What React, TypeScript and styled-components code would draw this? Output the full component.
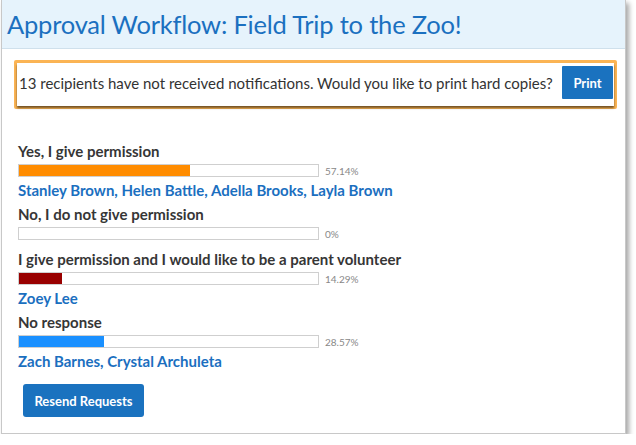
import React from 'react';
import styled, { createGlobalStyle } from 'styled-components';

const GlobalStyle = createGlobalStyle`
  html, body {
    margin: 0;
    padding: 0;
    background: #fff;
    font-family: Lato, "Open Sans", sans-serif;
  }
`;

const Panel = styled.div`
  margin-left: 1px;
  width: 623px;
  height: 433px;
  background: #fff;
  border: 1px solid #c8c8c8;
  border-top: none;
  box-shadow: 3px 3px 5px rgba(0, 0, 0, 0.35);
  display: flex;
  flex-direction: column;
`;

const Header = styled.div`
  height: 48px;
  background: #e6f3fc;
  border-bottom: 1px solid #cfe0ec;
  display: flex;
  align-items: center;
  padding-left: 5px;
`;

const Title = styled.h1`
  margin: 0;
  font-size: 25.5px;
  font-weight: 400;
  color: #1b70c0;
  letter-spacing: -0.2px;
`;

const Body = styled.div`
  flex: 1;
  display: flex;
  flex-direction: column;
  padding: 11px 8px 0 12px;
`;

const Notice = styled.div`
  background: #fbb454;
  padding: 3px;
  border-radius: 2px;
`;

const NoticeInner = styled.div`
  background: #fff;
  display: flex;
  align-items: center;
  justify-content: space-between;
  padding: 3px 1px 7px 2px;
  box-shadow: 0 2px 2px rgba(0, 0, 0, 0.55);
`;

const NoticeText = styled.span`
  font-size: 15px;
  color: #333;
`;

const Button = styled.button`
  border: none;
  border-radius: 3px;
  background: #1a72bf;
  color: #fff;
  font-family: Lato, sans-serif;
  font-weight: 700;
  font-size: 13px;
  cursor: pointer;
`;

const PrintButton = styled(Button)`
  width: 51px;
  height: 33px;
  border-radius: 1px;
`;

const Results = styled.div`
  margin-top: 32px;
  padding-left: 4px;
  display: flex;
  flex-direction: column;
  gap: 5px;
`;

const Group = styled.div`
  display: flex;
  flex-direction: column;
`;

const Label = styled.div`
  font-size: 15px;
  font-weight: 700;
  color: #363636;
  line-height: 20px;
`;

const BarRow = styled.div`
  display: flex;
  align-items: center;
  height: 13px;
  margin-top: 3px;
  margin-bottom: 4px;
`;

const Track = styled.div`
  width: 299px;
  height: 11px;
  border: 1px solid #cfcfcf;
  background: #fff;
`;

const Fill = styled.div<{ $color: string }>`
  height: 100%;
  background: ${(p) => p.$color};
`;

const Percent = styled.span`
  margin-left: 6px;
  font-size: 10px;
  line-height: 12px;
  color: #888;
`;

const Names = styled.div`
  font-size: 15px;
  font-weight: 700;
  color: #1b6fbf;
  line-height: 18px;
`;

const ResendButton = styled(Button)`
  align-self: flex-start;
  margin: 14px 0 0 9px;
  width: 121px;
  height: 33px;
`;

const results = [
  { label: 'Yes, I give permission', pct: 57.14, color: '#ff8c00', names: 'Stanley Brown, Helen Battle, Adella Brooks, Layla Brown' },
  { label: 'No, I do not give permission', pct: 0, color: '#ff8c00', names: '' },
  { label: 'I give permission and I would like to be a parent volunteer', pct: 14.29, color: '#990000', names: 'Zoey Lee' },
  { label: 'No response', pct: 28.57, color: '#1a90ff', names: 'Zach Barnes, Crystal Archuleta' },
];

const App: React.FC = () => {
  return (
    <>
      <GlobalStyle />
      <Panel>
        <Header>
          <Title>Approval Workflow: Field Trip to the Zoo!</Title>
        </Header>
        <Body>
          <Notice>
            <NoticeInner>
              <NoticeText>13 recipients have not received notifications. Would you like to print hard copies?</NoticeText>
              <PrintButton>Print</PrintButton>
            </NoticeInner>
          </Notice>
          <Results>
            {results.map((r) => (
              <Group key={r.label}>
                <Label>{r.label}</Label>
                <BarRow>
                  <Track>
                    <Fill $color={r.color} style={{ width: `${r.pct}%` }} />
                  </Track>
                  <Percent>{r.pct === 0 ? '0' : r.pct.toFixed(2)}%</Percent>
                </BarRow>
                {r.names && <Names>{r.names}</Names>}
              </Group>
            ))}
          </Results>
          <ResendButton>Resend Requests</ResendButton>
        </Body>
      </Panel>
    </>
  );
};

export default App;
